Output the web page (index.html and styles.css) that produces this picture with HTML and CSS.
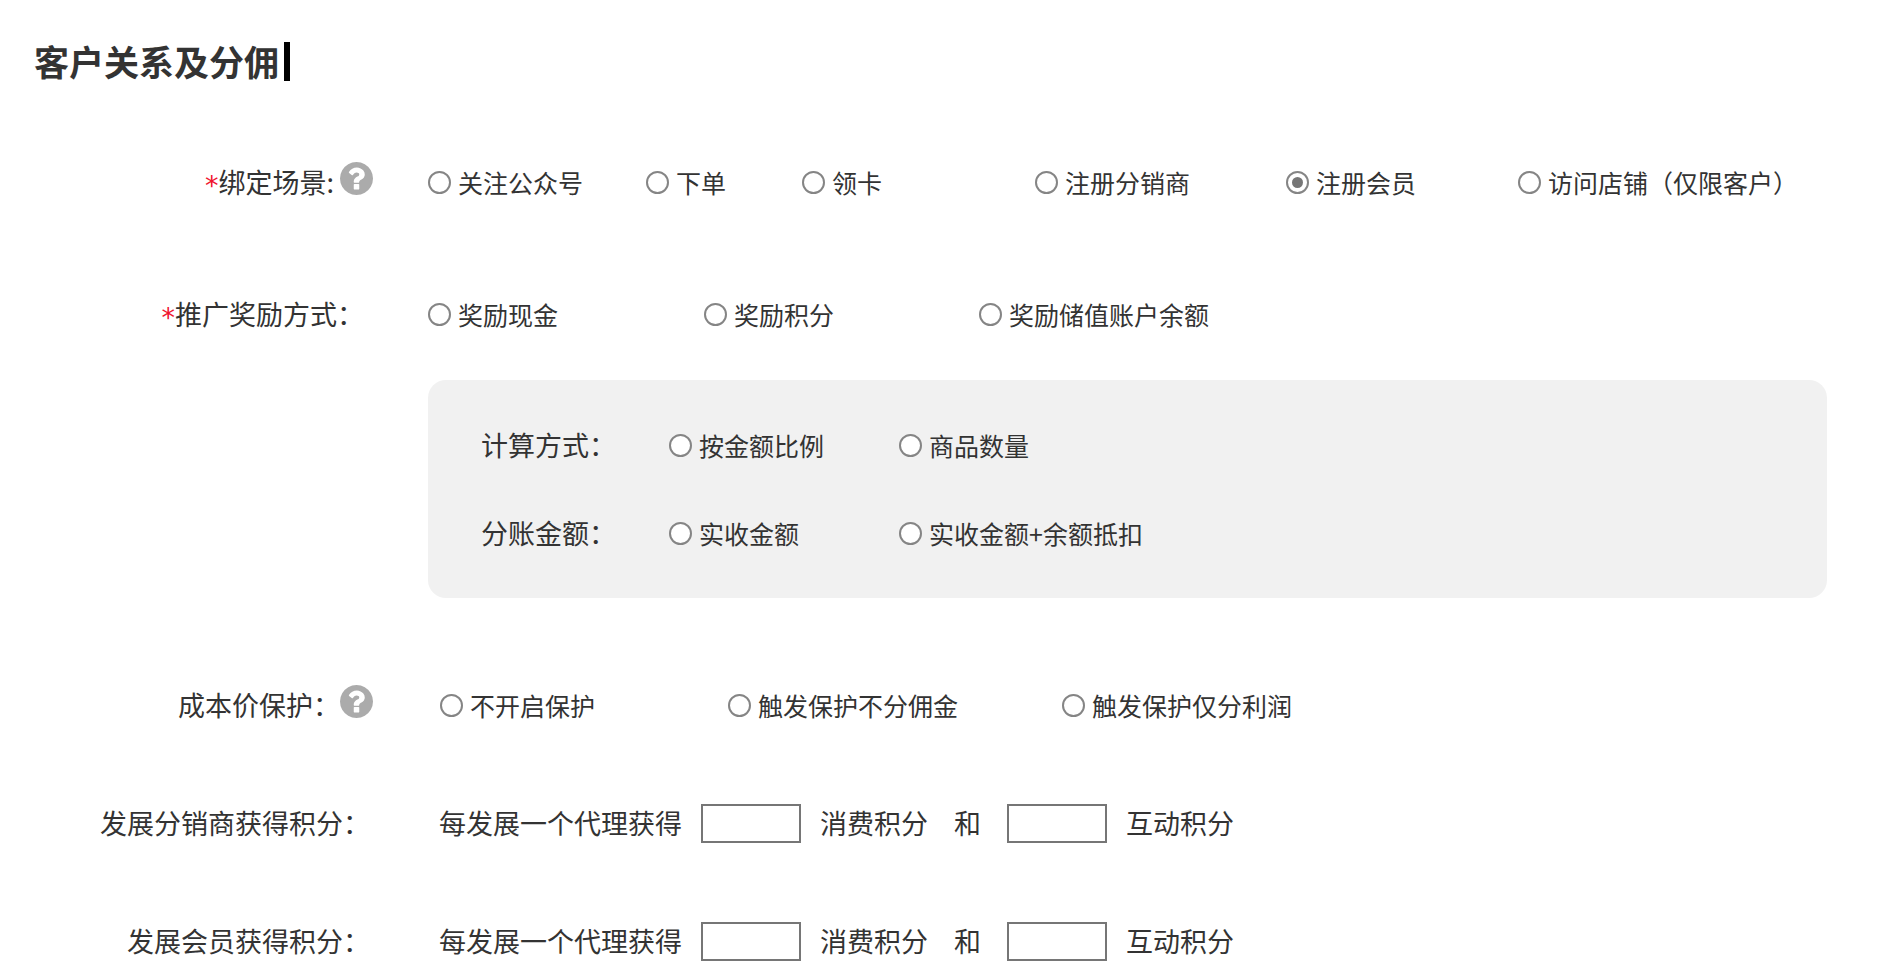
FILE: index.html
```html
<!DOCTYPE html>
<html lang="zh-CN">
<head>
<meta charset="utf-8">
<meta name="viewport" content="width=device-width, initial-scale=1">
<title>客户关系及分佣</title>
<link rel="stylesheet" href="styles.css">
</head>
<body>
<svg class="sprite" aria-hidden="true">
  <symbol id="help" viewBox="128 128 1536 1536">
    <path d="M1024 1376v-192q0-14-9-23t-23-9h-192q-14 0-23 9t-9 23v192q0 14 9 23t23 9h192q14 0 23-9t9-23zm256-672q0-88-55.500-163t-138.500-116-170-41q-243 0-371 213-15 24 8 42l132 100q7 6 19 6 16 0 25-12 53-68 86-92 34-24 86-24 48 0 85.500 26t37.500 59q0 38-20 61t-68 45q-63 28-115.500 86.500t-52.500 125.500v36q0 14 9 23t23 9h192q14 0 23-9t9-23q0-19 21.500-49.500t54.500-49.500q32-18 49-28.500t46-35 44.500-48 28-60.500 12.500-81zm384 192q0 209-103 385.500t-279.500 279.500-385.500 103-385.500-103-279.500-279.500-103-385.500 103-385.500 279.500-279.500 385.500-103 385.500 103 279.500 279.500 103 385.500z"/>
  </symbol>
</svg>
<form class="page">
  <header class="heading">
    <h1 class="title">客户关系及分佣</h1>
    <span class="caret"></span>
  </header>

  <div class="row row-scene" role="radiogroup" aria-labelledby="l-scene">
    <div class="label">
      <span id="l-scene"><span class="required">*</span>绑定场景:</span>
      <button class="help help-tight" type="button" aria-label="帮助"><svg><use href="#help"/></svg></button>
    </div>
    <div class="options options-scene">
      <label class="option"><input type="radio" name="scene">关注公众号</label>
      <label class="option"><input type="radio" name="scene">下单</label>
      <label class="option"><input type="radio" name="scene">领卡</label>
      <label class="option"><input type="radio" name="scene">注册分销商</label>
      <label class="option"><input type="radio" name="scene" checked>注册会员</label>
      <label class="option"><input type="radio" name="scene">访问店铺（仅限客户）</label>
    </div>
  </div>

  <div class="row row-reward" role="radiogroup" aria-labelledby="l-reward">
    <div class="label label-inset"><span id="l-reward"><span class="required">*</span>推广奖励方式：</span></div>
    <div class="options options-reward">
      <label class="option"><input type="radio" name="reward">奖励现金</label>
      <label class="option"><input type="radio" name="reward">奖励积分</label>
      <label class="option"><input type="radio" name="reward">奖励储值账户余额</label>
    </div>
  </div>

  <div class="row row-panel">
    <div class="panel">
      <div class="panel-row" role="radiogroup" aria-labelledby="l-calc">
        <span id="l-calc">计算方式：</span>
        <label class="option"><input type="radio" name="calc">按金额比例</label>
        <label class="option"><input type="radio" name="calc">商品数量</label>
      </div>
      <div class="panel-row" role="radiogroup" aria-labelledby="l-amount">
        <span id="l-amount">分账金额：</span>
        <label class="option"><input type="radio" name="amount">实收金额</label>
        <label class="option"><input type="radio" name="amount">实收金额+余额抵扣</label>
      </div>
    </div>
  </div>

  <div class="row row-protect" role="radiogroup" aria-labelledby="l-protect">
    <div class="label">
      <span id="l-protect">成本价保护：</span>
      <button class="help" type="button" aria-label="帮助"><svg><use href="#help"/></svg></button>
    </div>
    <div class="options options-protect">
      <label class="option"><input type="radio" name="protect">不开启保护</label>
      <label class="option"><input type="radio" name="protect">触发保护不分佣金</label>
      <label class="option"><input type="radio" name="protect">触发保护仅分利润</label>
    </div>
  </div>

  <div class="row row-points">
    <div class="label label-points">发展分销商获得积分：</div>
    <div class="points">
      <div class="field"><span>每发展一个代理获得</span><input id="d1" class="number" type="text"><label for="d1">消费积分</label></div>
      <span>和</span>
      <div class="field"><input id="d2" class="number" type="text"><label for="d2">互动积分</label></div>
    </div>
  </div>

  <div class="row row-points">
    <div class="label label-points">发展会员获得积分：</div>
    <div class="points">
      <div class="field"><span>每发展一个代理获得</span><input id="m1" class="number" type="text"><label for="m1">消费积分</label></div>
      <span>和</span>
      <div class="field"><input id="m2" class="number" type="text"><label for="m2">互动积分</label></div>
    </div>
  </div>
</form>
</body>
</html>
```
FILE: styles.css
```css
* {
  box-sizing: border-box;
}

body {
  margin: 0;
  background: #fff;
  color: #333;
  font-family: "Noto Sans CJK SC", sans-serif;
  font-size: 27px;
  line-height: 40px;
  white-space: nowrap;
}

.sprite {
  display: none;
}

.page {
  padding: 41px 77px 8px 0;
}

.heading {
  display: flex;
  align-items: center;
  gap: 5px;
  padding-left: 34px;
}

.title {
  margin: 0;
  font-size: 35px;
  font-weight: 700;
  line-height: 40px;
}

.caret {
  width: 6px;
  height: 39px;
  background: #000;
}

.row {
  display: grid;
  grid-template-columns: 373px minmax(0, 1fr);
  column-gap: 55px;
}

.row-scene {
  margin-top: 81px;
}

.row-reward {
  margin-top: 92px;
}

.row-panel {
  margin-top: 46px;
}

.row-protect {
  margin-top: 87px;
}

.row-points {
  margin-top: 78px;
}

.label {
  display: flex;
  justify-content: flex-end;
}

.label-inset {
  padding-right: 9px;
}

.label-points {
  padding-right: 3px;
}

.required {
  color: #f0142f;
  font-family: "DejaVu Sans", sans-serif;
  line-height: 0;
  vertical-align: -2px;
}

.help {
  width: 33px;
  height: 33px;
  padding: 0;
  border: 0;
  background: none;
}

.help-tight {
  margin-left: 6px;
}

.help svg {
  display: block;
  width: 33px;
  height: 33px;
  fill: #ababab;
}

.options {
  display: grid;
  align-items: center;
}

.options-scene {
  grid-template-columns: 218fr 156fr 233fr 251fr 232fr 309fr;
}

.options-reward {
  grid-template-columns: 276fr 275fr 848fr;
}

.options-protect {
  grid-template-columns: 288fr 334fr 765fr;
  padding-left: 12px;
}

.option {
  display: flex;
  align-items: center;
  gap: 7px;
  font-size: 25px;
}

.option input {
  display: grid;
  place-items: center;
  flex: none;
  width: 23px;
  height: 23px;
  margin: 0;
  border: 2px solid #858585;
  border-radius: 50%;
  background: #fff;
  appearance: none;
}

.option input:checked::before {
  width: 11px;
  height: 11px;
  border-radius: 50%;
  background: #767676;
  content: "";
}

.panel {
  display: grid;
  grid-column: 2;
  row-gap: 48px;
  padding: 45px 53px;
  border-radius: 18px;
  background: #f1f1f1;
}

.panel-row {
  display: grid;
  grid-template-columns: 188px 230px 1fr;
  align-items: center;
}

.points {
  display: flex;
  align-items: center;
  gap: 26px;
  padding-left: 11px;
}

.field {
  display: flex;
  align-items: center;
  gap: 19px;
}

.number {
  width: 100px;
  height: 39px;
  padding: 0 8px;
  border: 2px solid #767676;
  border-radius: 0;
  background: #fff;
  color: inherit;
  font: inherit;
}
```
